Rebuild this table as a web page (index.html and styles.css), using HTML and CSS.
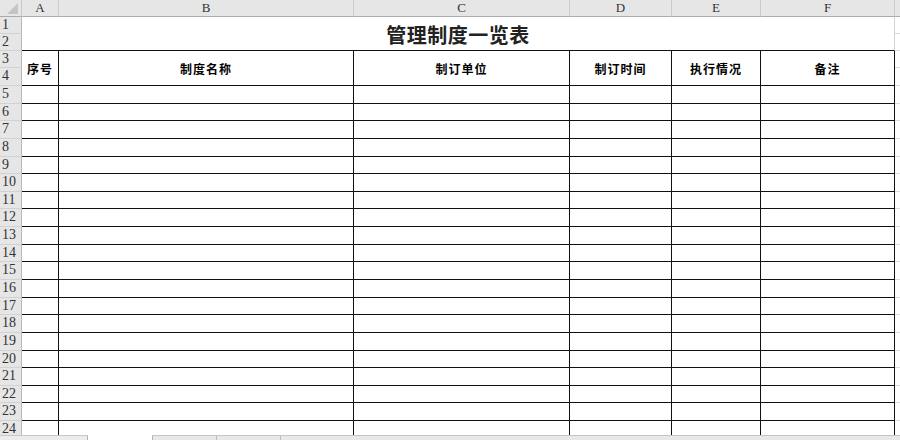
FILE: index.html
```html
<!DOCTYPE html>
<html lang="zh-CN">
<head>
<meta charset="utf-8">
<title>管理制度一览表</title>
<link rel="stylesheet" href="styles.css">
</head>
<body>
<div class="app">
  <div class="sheet">
    <div class="corner"><span class="tri"></span></div>
    <div class="ch">A</div><div class="ch">B</div><div class="ch">C</div><div class="ch">D</div><div class="ch">E</div><div class="ch">F</div><div class="ch chg"></div>

    <div class="rh">1</div><div class="title">管理制度一览表</div><div class="g"></div>
    <div class="rh">2</div><div class="g"></div>
    <div class="rh">3</div>
    <div class="hd">序号</div><div class="hd">制度名称</div><div class="hd">制订单位</div><div class="hd">制订时间</div><div class="hd">执行情况</div><div class="hd">备注</div><div class="g"></div>
    <div class="rh">4</div><div class="g"></div>

    <div class="rh">5</div><div class="c"></div><div class="c"></div><div class="c"></div><div class="c"></div><div class="c"></div><div class="c"></div><div class="g"></div>
    <div class="rh">6</div><div class="c"></div><div class="c"></div><div class="c"></div><div class="c"></div><div class="c"></div><div class="c"></div><div class="g"></div>
    <div class="rh">7</div><div class="c"></div><div class="c"></div><div class="c"></div><div class="c"></div><div class="c"></div><div class="c"></div><div class="g"></div>
    <div class="rh">8</div><div class="c"></div><div class="c"></div><div class="c"></div><div class="c"></div><div class="c"></div><div class="c"></div><div class="g"></div>
    <div class="rh">9</div><div class="c"></div><div class="c"></div><div class="c"></div><div class="c"></div><div class="c"></div><div class="c"></div><div class="g"></div>
    <div class="rh">10</div><div class="c"></div><div class="c"></div><div class="c"></div><div class="c"></div><div class="c"></div><div class="c"></div><div class="g"></div>
    <div class="rh">11</div><div class="c"></div><div class="c"></div><div class="c"></div><div class="c"></div><div class="c"></div><div class="c"></div><div class="g"></div>
    <div class="rh">12</div><div class="c"></div><div class="c"></div><div class="c"></div><div class="c"></div><div class="c"></div><div class="c"></div><div class="g"></div>
    <div class="rh">13</div><div class="c"></div><div class="c"></div><div class="c"></div><div class="c"></div><div class="c"></div><div class="c"></div><div class="g"></div>
    <div class="rh">14</div><div class="c"></div><div class="c"></div><div class="c"></div><div class="c"></div><div class="c"></div><div class="c"></div><div class="g"></div>
    <div class="rh">15</div><div class="c"></div><div class="c"></div><div class="c"></div><div class="c"></div><div class="c"></div><div class="c"></div><div class="g"></div>
    <div class="rh">16</div><div class="c"></div><div class="c"></div><div class="c"></div><div class="c"></div><div class="c"></div><div class="c"></div><div class="g"></div>
    <div class="rh">17</div><div class="c"></div><div class="c"></div><div class="c"></div><div class="c"></div><div class="c"></div><div class="c"></div><div class="g"></div>
    <div class="rh">18</div><div class="c"></div><div class="c"></div><div class="c"></div><div class="c"></div><div class="c"></div><div class="c"></div><div class="g"></div>
    <div class="rh">19</div><div class="c"></div><div class="c"></div><div class="c"></div><div class="c"></div><div class="c"></div><div class="c"></div><div class="g"></div>
    <div class="rh">20</div><div class="c"></div><div class="c"></div><div class="c"></div><div class="c"></div><div class="c"></div><div class="c"></div><div class="g"></div>
    <div class="rh">21</div><div class="c"></div><div class="c"></div><div class="c"></div><div class="c"></div><div class="c"></div><div class="c"></div><div class="g"></div>
    <div class="rh">22</div><div class="c"></div><div class="c"></div><div class="c"></div><div class="c"></div><div class="c"></div><div class="c"></div><div class="g"></div>
    <div class="rh">23</div><div class="c"></div><div class="c"></div><div class="c"></div><div class="c"></div><div class="c"></div><div class="c"></div><div class="g"></div>
    <div class="rh">24</div><div class="c"></div><div class="c"></div><div class="c"></div><div class="c"></div><div class="c"></div><div class="c"></div><div class="g"></div>
  </div>
  <div class="tabs">
    <div class="tab-left"></div>
    <div class="tab-gap"></div>
    <div class="tab-scroll"><span class="tick"></span><span class="tick"></span></div>
  </div>
</div>
</body>
</html>
```

FILE: styles.css
```css
* { box-sizing: border-box; }
html, body { margin: 0; padding: 0; background: #fff; }
.app {
  width: 900px;
  height: 440px;
  display: flex;
  flex-direction: column;
  overflow: hidden;
}
.sheet {
  flex: 1;
  overflow: hidden;
  display: grid;
  grid-template-columns: 22px 37px 295px 216px 102px 89px 134px 5px;
  grid-template-rows: 17px 17px 17px 17px 18px 18px 17px 18px 18px 17px 18px 17px 18px 18px 17px 18px 18px 17px 18px 18px 17px 18px 17px 18px 18px;
  font-family: "Liberation Serif", "DejaVu Serif", serif;
}
.corner {
  background: #e6e6e6;
  border-right: 1px solid #c8c8c8;
  border-bottom: 1px solid #ababab;
  display: flex;
  align-items: flex-end;
  justify-content: flex-end;
  padding: 0 3px 2px 0;
}
.tri {
  width: 0;
  height: 0;
  border-left: 11px solid transparent;
  border-bottom: 11px solid #c4c4c4;
}
.ch {
  background: #e6e6e6;
  border-right: 1px solid #cbcbcb;
  border-bottom: 1px solid #ababab;
  color: #333;
  font-size: 13px;
  line-height: 16px;
  text-align: center;
}
.chg { border-right: none; }
.rh {
  background: #e6e6e6;
  border-right: 1px solid #b8b8b8;
  border-bottom: 1px solid #d2d2d2;
  color: #333;
  font-size: 14px;
  line-height: 16px;
  padding-left: 2px;
  overflow: hidden;
}
.title {
  grid-column: span 6;
  grid-row: span 2;
  border-right: 1px solid #d4d4d4;
  border-bottom: 1px solid #111;
  display: flex;
  align-items: center;
  justify-content: center;
  font-family: "Noto Sans CJK SC", "Liberation Serif", serif;
  font-weight: 700;
  font-size: 20px;
  color: #222;
  letter-spacing: 0.5px;
  padding-top: 2px;
}
.hd {
  grid-row: span 2;
  border-right: 1px solid #111;
  border-bottom: 1px solid #111;
  display: flex;
  align-items: center;
  justify-content: center;
  font-family: "Noto Sans CJK SC", "Liberation Sans", sans-serif;
  font-weight: 700;
  font-size: 12px;
  letter-spacing: 1px;
  color: #000;
}
.c {
  border-right: 1px solid #111;
  border-bottom: 1px solid #111;
}
.g {
  border-bottom: 1px solid #dadada;
}
.tabs {
  height: 5px;
  flex: none;
  display: flex;
  background: #fff;
}
.tab-left {
  width: 88px;
  background: #ececec;
  border-top: 1px solid #c8c8c8;
  border-right: 1px solid #b5b5b5;
}
.tab-gap {
  width: 64px;
  background: #fff;
}
.tab-scroll {
  flex: 1;
  background: #e8e8e8;
  border-top: 1px solid #c6c6c6;
  border-left: 1px solid #b5b5b5;
  display: flex;
  gap: 63px;
  padding-left: 63px;
}
.tick {
  width: 1px;
  height: 4px;
  background: #bdbdbd;
}
```
